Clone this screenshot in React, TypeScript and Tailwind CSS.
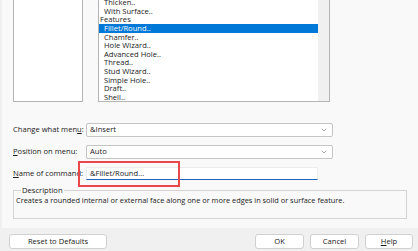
import { ChevronDown } from "lucide-react"

const items = [
  { label: "Thicken..", indent: true },
  { label: "With Surface..", indent: true },
  { label: "Features", indent: false },
  { label: "Fillet/Round..", indent: true, selected: true },
  { label: "Chamfer..", indent: true },
  { label: "Hole Wizard..", indent: true },
  { label: "Advanced Hole..", indent: true },
  { label: "Thread..", indent: true },
  { label: "Stud Wizard..", indent: true },
  { label: "Simple Hole..", indent: true },
  { label: "Draft..", indent: true },
  { label: "Shell..", indent: true },
]

function Dropdown({ value }: { value: string }) {
  return (
    <div className="w-[247px] h-[14px] bg-white border border-[#c4c4c4] rounded-[2px] flex items-center justify-between pl-[3px] pr-[4px]">
      <span>{value}</span>
      <ChevronDown size={8} strokeWidth={1.5} className="text-[#555]" />
    </div>
  )
}

function Btn({ children, w }: { children: React.ReactNode; w: string }) {
  return (
    <button className={`${w} h-[15px] bg-white border border-[#d0d0d0] rounded-[3px] flex items-center justify-center text-[#1a1a1a]`}>
      {children}
    </button>
  )
}

export default function App() {
  return (
    <div
      className="w-[418px] h-[251px] bg-[#f0f0f0] overflow-hidden text-[7.6px] text-[#1a1a1a]"
      style={{ fontFamily: '"Open Sans", "Noto Sans", sans-serif' }}
    >
      <div className="ml-[2px] h-[228px] bg-[#f9f9f9] flex flex-col">
        {/* list boxes */}
        <div className="flex gap-[15px] pl-[11px] h-[102px]">
          <div className="w-[70px] h-full bg-white border border-t-0 border-[#b4b4b4]" />
          <div className="w-[232px] h-full bg-white border border-t-0 border-[#b4b4b4] flex overflow-hidden">
            <div className="flex-1 -mt-[2px] leading-[8.65px]">
              {items.map((it, i) => (
                <div
                  key={i}
                  className={`h-[8.65px] ${it.indent ? "pl-[5px]" : "pl-[1px]"} ${it.selected ? "bg-[#0078d7] text-white" : ""}`}
                >
                  {it.label}
                </div>
              ))}
            </div>
            <div className="w-[11px] h-full bg-[#f0f0f0]" />
          </div>
        </div>

        {/* form rows */}
        <div className="flex items-center pl-[11px] mt-[21px]">
          <span className="w-[73px]">
            Change what men<u>u</u>:
          </span>
          <Dropdown value="&Insert" />
        </div>
        <div className="flex items-center pl-[11px] mt-[8px]">
          <span className="w-[73px]">
            <u>P</u>osition on menu:
          </span>
          <Dropdown value="Auto" />
        </div>
        <div className="flex items-center pl-[11px] mt-[8px] relative">
          <span className="w-[73px]">
            <u>N</u>ame of command:
          </span>
          <div className="w-[232px] h-[13px] bg-white border border-[#ececec] border-b-[#1f66b8] flex items-center pl-[3px]">
            &amp;Fillet/Round...
          </div>
          <div className="absolute left-[76px] top-[-6px] w-[102px] h-[26px] border-2 border-[#e8484a]" />
        </div>

        {/* description group */}
        <div className="ml-[11px] mt-[10px] w-[394px] h-[29px] border border-[#d4d4d4] relative">
          <span className="absolute left-[7px] top-[-6px] bg-[#f9f9f9] px-[1px] leading-[10px]">
            Description
          </span>
          <div className="pl-[2px] pt-[4px] text-[7.4px]">
            Creates a rounded internal or external face along one or more edges in solid or surface feature.
          </div>
        </div>
      </div>

      {/* buttons */}
      <div className="flex items-center mt-[6px] pl-[9px] pr-[5px]">
        <Btn w="w-[98px]">Reset to Defaults</Btn>
        <div className="flex-1" />
        <div className="flex gap-[6px]">
          <Btn w="w-[49px]">OK</Btn>
          <Btn w="w-[49px]">Cancel</Btn>
          <Btn w="w-[48px]">
            <span>
              <u>H</u>elp
            </span>
          </Btn>
        </div>
      </div>
    </div>
  )
}
